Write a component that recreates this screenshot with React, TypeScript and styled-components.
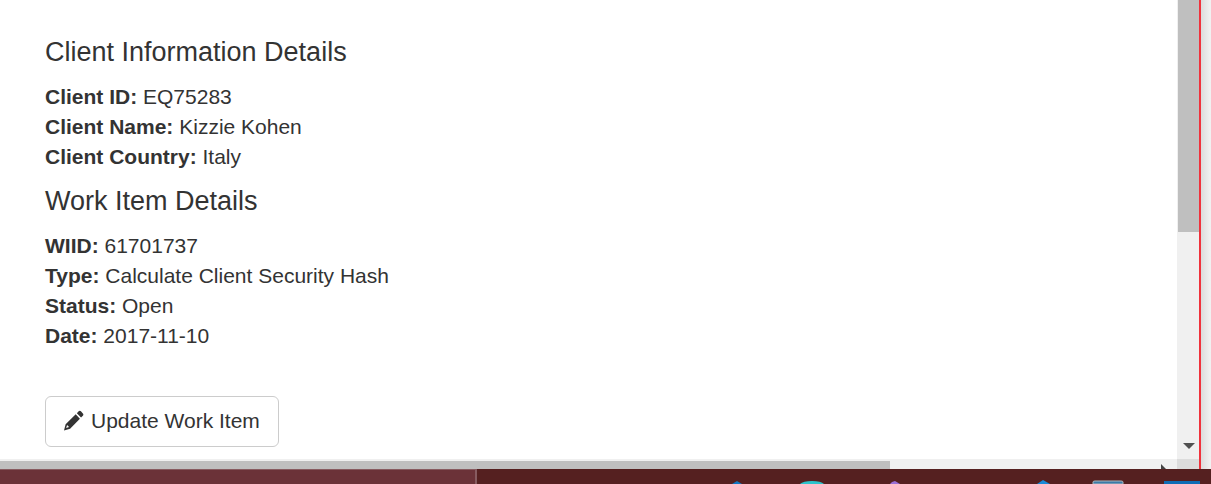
import styled, { createGlobalStyle } from 'styled-components';

const GlobalStyle = createGlobalStyle`
  html, body {
    margin: 0;
    height: 100%;
    overflow: hidden;
    background: #fff;
  }
  #root {
    height: 100%;
  }
`;

const clientRows = [
  { label: 'Client ID:', value: 'EQ75283' },
  { label: 'Client Name:', value: 'Kizzie Kohen' },
  { label: 'Client Country:', value: 'Italy' },
];

const workRows = [
  { label: 'WIID:', value: '61701737' },
  { label: 'Type:', value: 'Calculate Client Security Hash' },
  { label: 'Status:', value: 'Open' },
  { label: 'Date:', value: '2017-11-10' },
];

const PencilIcon = () => (
  <svg width="20" height="21" viewBox="0 0 21 22" aria-hidden="true">
    <path fill="#333" d="M15.4 1.4c.7-.7 1.7-.7 2.4 0l2 2.2c.7.7.7 1.7 0 2.4l-1.9 1.9-4.4-4.6zM12.3 4.5l4.4 4.6L6.4 19.7 0 21.4l1.7-6.4zM3.2 15.6l-.9 3.2 3-.9z" />
  </svg>
);

export default function App() {
  return (
    <>
      <GlobalStyle />
      <Screen>
        <Desktop>
          <Browser>
            <Viewport>
              <Page>
                <Heading>Client Information Details</Heading>
                {clientRows.map(row => (
                  <Row key={row.label}><b>{row.label}</b> {row.value}</Row>
                ))}
                <Heading $second>Work Item Details</Heading>
                {workRows.map(row => (
                  <Row key={row.label}><b>{row.label}</b> {row.value}</Row>
                ))}
                <Button type="button"><PencilIcon />Update Work Item</Button>
              </Page>
              <VScroll>
                <VThumb />
                <ArrowDown />
              </VScroll>
            </Viewport>
            <HScroll>
              <HTrack><HThumb /></HTrack>
              <Corner />
              <Cursor width="5" height="5" viewBox="0 0 5 5" aria-hidden="true">
                <path fill="#444" d="M0 0l5 5H0z" />
              </Cursor>
            </HScroll>
          </Browser>
          <RedEdge />
          <SideStrip />
        </Desktop>
        <Taskbar>
          <ActiveTask />
          <TrayIcons>
            <svg width="490" height="15" viewBox="0 0 490 15" aria-hidden="true">
              <path fill="#1177c4" d="M11 15l5-3 5 3z" />
              <path fill="#2cc4cc" d="M79 15c2-2 6-3 12-3s10 1 12 3z" />
              <path fill="#9a6fd6" d="M169 15l2-2 3-1 5 3z" />
              <path fill="#1a8ad8" d="M316 15l6-4 7 4z" />
              <path fill="#3b7aa8" stroke="#aeb6bc" strokeWidth="1" d="M372 15v-2q0-1 2-1h26q2 0 2 1v2z" />
              <rect x="443" y="12" width="36" height="3" fill="#0f6cb5" />
            </svg>
          </TrayIcons>
        </Taskbar>
      </Screen>
    </>
  );
}

const Screen = styled.div`
  height: 484px;
  display: grid;
  grid-template-rows: 469px 15px;
  font-family: "Liberation Sans", Arial, sans-serif;
  color: #333;
`;

const Desktop = styled.div`
  display: flex;
  min-height: 0;
`;

const Browser = styled.div`
  width: 1199px;
  display: flex;
  flex-direction: column;
`;

const Viewport = styled.div`
  flex: 1;
  display: flex;
  min-height: 0;
`;

const Page = styled.main`
  flex: 1;
  padding: 37px 0 0 45px;
  background: #fff;
`;

const Heading = styled.h3<{ $second?: boolean }>`
  margin: ${p => (p.$second ? '14px' : '0')} 0 15px;
  font-size: 27px;
  font-weight: 400;
  line-height: 30px;
`;

const Row = styled.div`
  font-size: 21px;
  line-height: 30px;
  b {
    font-weight: 700;
  }
`;

const Button = styled.button`
  display: flex;
  align-items: center;
  gap: 7px;
  width: 234px;
  height: 51px;
  margin-top: 45px;
  padding: 0 0 2px 18px;
  border: 1px solid #ccc;
  border-radius: 6px;
  background: #fff;
  color: #333;
  font-family: inherit;
  font-size: 21px;
`;

const VScroll = styled.div`
  width: 22px;
  background: #f0f0f0;
  display: flex;
  flex-direction: column;
  align-items: center;
  justify-content: space-between;
`;

const VThumb = styled.div`
  width: 21px;
  height: 232px;
  margin-left: 1px;
  background: #bfbfbf;
`;

const ArrowDown = styled.div`
  width: 0;
  height: 0;
  margin: 0 0 10px 2px;
  border-style: solid;
  border-width: 6px 6px 0;
  border-color: #505050 transparent transparent;
`;

const HScroll = styled.div`
  position: relative;
  height: 10px;
  display: flex;
  background: #f0f0f0;
`;

const HTrack = styled.div`
  flex: 1;
  padding-top: 2px;
`;

const HThumb = styled.div`
  width: 890px;
  height: 8px;
  background: #bfbfbf;
`;

const Corner = styled.div`
  width: 22px;
  background: #dcdcdc;
`;

const Cursor = styled.svg`
  position: absolute;
  left: 1161px;
  bottom: 0;
`;

const RedEdge = styled.div`
  width: 2px;
  background: #f0323c;
`;

const SideStrip = styled.div`
  flex: 1;
  background: linear-gradient(90deg, #dcdcdc, #f2f2f2);
`;

const Taskbar = styled.footer`
  position: relative;
  display: flex;
  background: #552020;
`;

const ActiveTask = styled.div`
  width: 477px;
  background: #6b3238;
  border-top: 1px solid #875b60;
  border-right: 2px solid #875b60;
  box-sizing: border-box;
`;

const TrayIcons = styled.div`
  position: absolute;
  right: 0;
  bottom: 0;
  height: 15px;
  line-height: 0;
`;
